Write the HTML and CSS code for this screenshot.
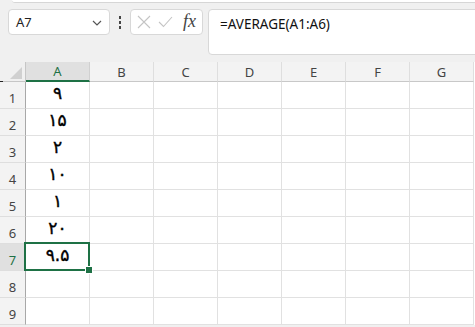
FILE: index.html
```html
<html lang="fa">

<head>
  <meta charset="UTF-8">
  <meta name="viewport" content="width=device-width, initial-scale=1.0">
  <link rel="stylesheet" href="styles.css">
</head>

<body>
  <div class="ribbon"></div>

  <div class="bar">
    <div class="namebox">
      <span>A7</span>
      <svg class="chev" width="10" height="6" viewBox="0 0 10 6"><path d="M1 1 L5 5 L9 1" fill="none" stroke="#555" stroke-width="1.2"/></svg>
    </div>
    <div class="dots"><i></i><i></i><i></i></div>
    <div class="fxbox">
      <svg width="14" height="14" viewBox="0 0 14 14"><path d="M1 1 L13 13 M13 1 L1 13" stroke="#c4c4c4" stroke-width="1.1"/></svg>
      <svg width="15" height="12" viewBox="0 0 15 12"><path d="M1 6 L5.5 10.5 L14 1" fill="none" stroke="#c4c4c4" stroke-width="1.1"/></svg>
      <span class="fx">fx</span>
    </div>
    <div class="formula">=AVERAGE(A1:A6)</div>
  </div>

  <div class="sheet">
    <div class="corner"></div>
    <div class="colhead sel">A</div>
    <div class="colhead">B</div>
    <div class="colhead">C</div>
    <div class="colhead">D</div>
    <div class="colhead">E</div>
    <div class="colhead">F</div>
    <div class="colhead">G</div>

    <div class="rowhead">1</div><div class="cell num">۹</div><div class="cell"></div><div class="cell"></div><div class="cell"></div><div class="cell"></div><div class="cell"></div><div class="cell"></div>
    <div class="rowhead">2</div><div class="cell num">۱۵</div><div class="cell"></div><div class="cell"></div><div class="cell"></div><div class="cell"></div><div class="cell"></div><div class="cell"></div>
    <div class="rowhead">3</div><div class="cell num">۲</div><div class="cell"></div><div class="cell"></div><div class="cell"></div><div class="cell"></div><div class="cell"></div><div class="cell"></div>
    <div class="rowhead">4</div><div class="cell num">۱۰</div><div class="cell"></div><div class="cell"></div><div class="cell"></div><div class="cell"></div><div class="cell"></div><div class="cell"></div>
    <div class="rowhead">5</div><div class="cell num">۱</div><div class="cell"></div><div class="cell"></div><div class="cell"></div><div class="cell"></div><div class="cell"></div><div class="cell"></div>
    <div class="rowhead">6</div><div class="cell num">۲۰</div><div class="cell"></div><div class="cell"></div><div class="cell"></div><div class="cell"></div><div class="cell"></div><div class="cell"></div>
    <div class="rowhead sel">7</div><div class="cell num active">۹.۵<span class="handle"></span></div><div class="cell"></div><div class="cell"></div><div class="cell"></div><div class="cell"></div><div class="cell"></div><div class="cell"></div>
    <div class="rowhead">8</div><div class="cell"></div><div class="cell"></div><div class="cell"></div><div class="cell"></div><div class="cell"></div><div class="cell"></div><div class="cell"></div>
    <div class="rowhead">9</div><div class="cell"></div><div class="cell"></div><div class="cell"></div><div class="cell"></div><div class="cell"></div><div class="cell"></div><div class="cell"></div>
  </div>
</body>

</html>
```

FILE: styles.css
```css
body {
  margin: 0;
  padding: 0;
  background: #f0f0f0;
  font-family: "Segoe UI", "Noto Sans", "Open Sans", sans-serif;
  color: #333;
  overflow: hidden;
}

.ribbon {
  height: 2px;
  margin-left: 12px;
  background: #fff;
  border-bottom: 1px solid #d6d6d6;
  border-bottom-left-radius: 5px;
}

.bar {
  display: flex;
  align-items: flex-start;
  padding: 6px 0 0 8px;
  height: 53px;
  box-sizing: border-box;
}

.namebox {
  width: 102px;
  height: 26px;
  box-sizing: border-box;
  background: #fff;
  border: 1px solid #d8d8d8;
  border-radius: 4px;
  display: flex;
  align-items: center;
  justify-content: space-between;
  padding: 0 7px 0 7px;
  font-size: 13px;
  color: #222;
}

.chev {
  margin-top: 1px;
}

.dots {
  width: 20px;
  height: 26px;
  display: flex;
  flex-direction: column;
  align-items: center;
  justify-content: center;
  gap: 2px;
}

.dots i {
  width: 2px;
  height: 3px;
  background: #444;
}

.fxbox {
  width: 73px;
  height: 26px;
  box-sizing: border-box;
  background: #fff;
  border: 1px solid #d8d8d8;
  border-radius: 4px;
  display: flex;
  align-items: center;
  gap: 7px;
  padding-left: 6px;
}

.fx {
  font-family: "Liberation Serif", "DejaVu Serif", serif;
  font-style: italic;
  font-size: 18px;
  color: #444;
  margin-left: 3px;
  margin-top: -2px;
}

.formula {
  flex: 1;
  margin-left: 5px;
  margin-right: -6px;
  height: 46px;
  box-sizing: border-box;
  background: #fff;
  border: 1px solid #d8d8d8;
  border-radius: 4px;
  padding: 5px 0 0 11px;
  font-size: 13.5px;
  color: #111;
}

.sheet {
  position: relative;
  margin-top: 6px;
  display: grid;
  grid-template-columns: 26px repeat(7, 64px);
  grid-template-rows: 20px;
  grid-auto-rows: 27px;
  background: #fff;
}

.corner {
  position: relative;
  background: #f0f0f0;
  border-right: 1px solid #c6c6c6;
  border-bottom: 1px solid #c6c6c6;
  box-sizing: border-box;
}

.corner::after {
  content: "";
  position: absolute;
  right: 3px;
  bottom: 2px;
  width: 0;
  height: 0;
  border-left: 12px solid transparent;
  border-bottom: 12px solid #d0d0d0;
}

.corner::before {
  content: "";
  position: absolute;
  left: 0;
  bottom: -1px;
  width: 3px;
  height: 1px;
  background: #222;
}

.colhead {
  background: #f3f3f3;
  border-right: 1px solid #dedede;
  border-bottom: 1px solid #c8c8c8;
  box-sizing: border-box;
  display: flex;
  align-items: center;
  justify-content: center;
  font-size: 13px;
  color: #444;
}

.colhead.sel {
  background: #e0e0e0;
  color: #1e7145;
  border-bottom: 2px solid #1e7145;
  border-right-color: #d0d0d0;
}

.rowhead {
  background: #f3f3f3;
  border-right: 1px solid #a8a8a8;
  border-bottom: 1px solid #dedede;
  box-sizing: border-box;
  display: flex;
  align-items: flex-end;
  justify-content: center;
  padding-bottom: 1px;
  font-size: 13px;
  color: #444;
}

.rowhead.sel {
  background: #e0e0e0;
  color: #1e7145;
}

.cell {
  border-right: 1px solid #e1e1e1;
  border-bottom: 1px solid #e1e1e1;
  box-sizing: border-box;
}

.num {
  display: flex;
  justify-content: center;
  align-items: flex-start;
  padding-top: 1px;
  font-family: "DejaVu Sans", sans-serif;
  font-size: 17px;
  color: #000;
  -webkit-text-stroke: 0.4px #000;
}

.active {
  position: relative;
}

.active::before {
  content: "";
  position: absolute;
  left: -2px;
  top: -2px;
  right: -1px;
  bottom: -1px;
  border: 2px solid #1e7145;
}

.handle {
  position: absolute;
  right: -4px;
  bottom: -4px;
  width: 6px;
  height: 6px;
  background: #1e7145;
  border: 1px solid #fff;
}
```
